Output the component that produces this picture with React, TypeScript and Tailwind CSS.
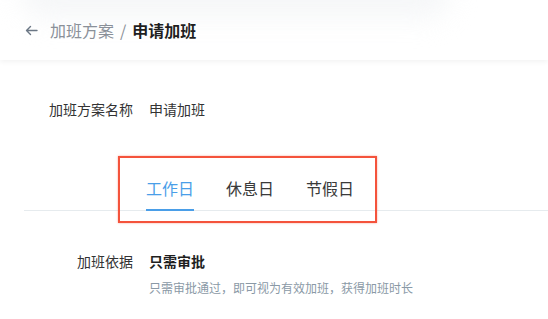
const FONT = "font-['Noto_Sans_CJK_SC','Microsoft_YaHei',sans-serif]";

const tabs = ['工作日', '休息日', '节假日'];

export default function App() {
  const active = 0;
  return (
    <div className={`relative w-[548px] h-[319px] overflow-hidden bg-white ${FONT}`}>
      {/* faint shadow of a layer above */}
      <div className="pointer-events-none absolute -top-[30px] left-[20px] h-[48px] w-[430px] rounded-full bg-[#f1f3f5] blur-[14px] opacity-70" />

      <header className="relative flex h-[60px] items-center pl-[25px] shadow-[0_2px_5px_rgba(0,0,0,0.05)]">
        <svg width="13" height="11" viewBox="0 0 13 11" fill="none" stroke="#6b7785" strokeWidth="1.4" strokeLinecap="round" strokeLinejoin="round">
          <path d="M12 5.5H1.5M5.5 1.5 1.5 5.5 5.5 9.5" />
        </svg>
        <div className="ml-[12px] flex items-center text-[16px] leading-[22px]">
          <span className="text-[#8a9099]">加班方案</span>
          <span className="mx-[6px] text-[#8a9099]">/</span>
          <span className="font-bold text-[#1f1f1f]">申请加班</span>
        </div>
      </header>

      <div className="mt-[39px] grid grid-cols-[133px_1fr] gap-x-[16px] text-[14px] leading-[20px] text-[#333]">
        <span className="text-right">加班方案名称</span>
        <span>申请加班</span>
      </div>

      <div className="ml-[24px] mt-[58px] flex gap-[32px] border-b border-[#e6ebee] pl-[122px]">
        {tabs.map((t, i) => (
          <div
            key={t}
            className={`-mb-px border-b-2 pb-[10px] text-[16px] leading-[22px] ${
              i === active ? 'border-[#4a9ee8] text-[#4a9ee8]' : 'border-transparent text-[#3a3a3a]'
            }`}
          >
            {t}
          </div>
        ))}
      </div>

      <div className="mt-[40px] grid grid-cols-[133px_1fr] gap-x-[16px] text-[14px] leading-[20px] text-[#333]">
        <span className="text-right">加班依据</span>
        <span className="font-bold text-[#1f1f1f]">只需审批</span>
        <span />
        <span className="mt-[8px] text-[12px] leading-[18px] text-[#8a99a6]">
          只需审批通过，即可视为有效加班，获得加班时长
        </span>
      </div>

      {/* annotation box */}
      <div className="pointer-events-none absolute left-[118px] top-[156px] h-[67px] w-[259px] border-2 border-[#f4533c] shadow-[0_0_2px_rgba(244,83,60,0.5)]" />
    </div>
  );
}
